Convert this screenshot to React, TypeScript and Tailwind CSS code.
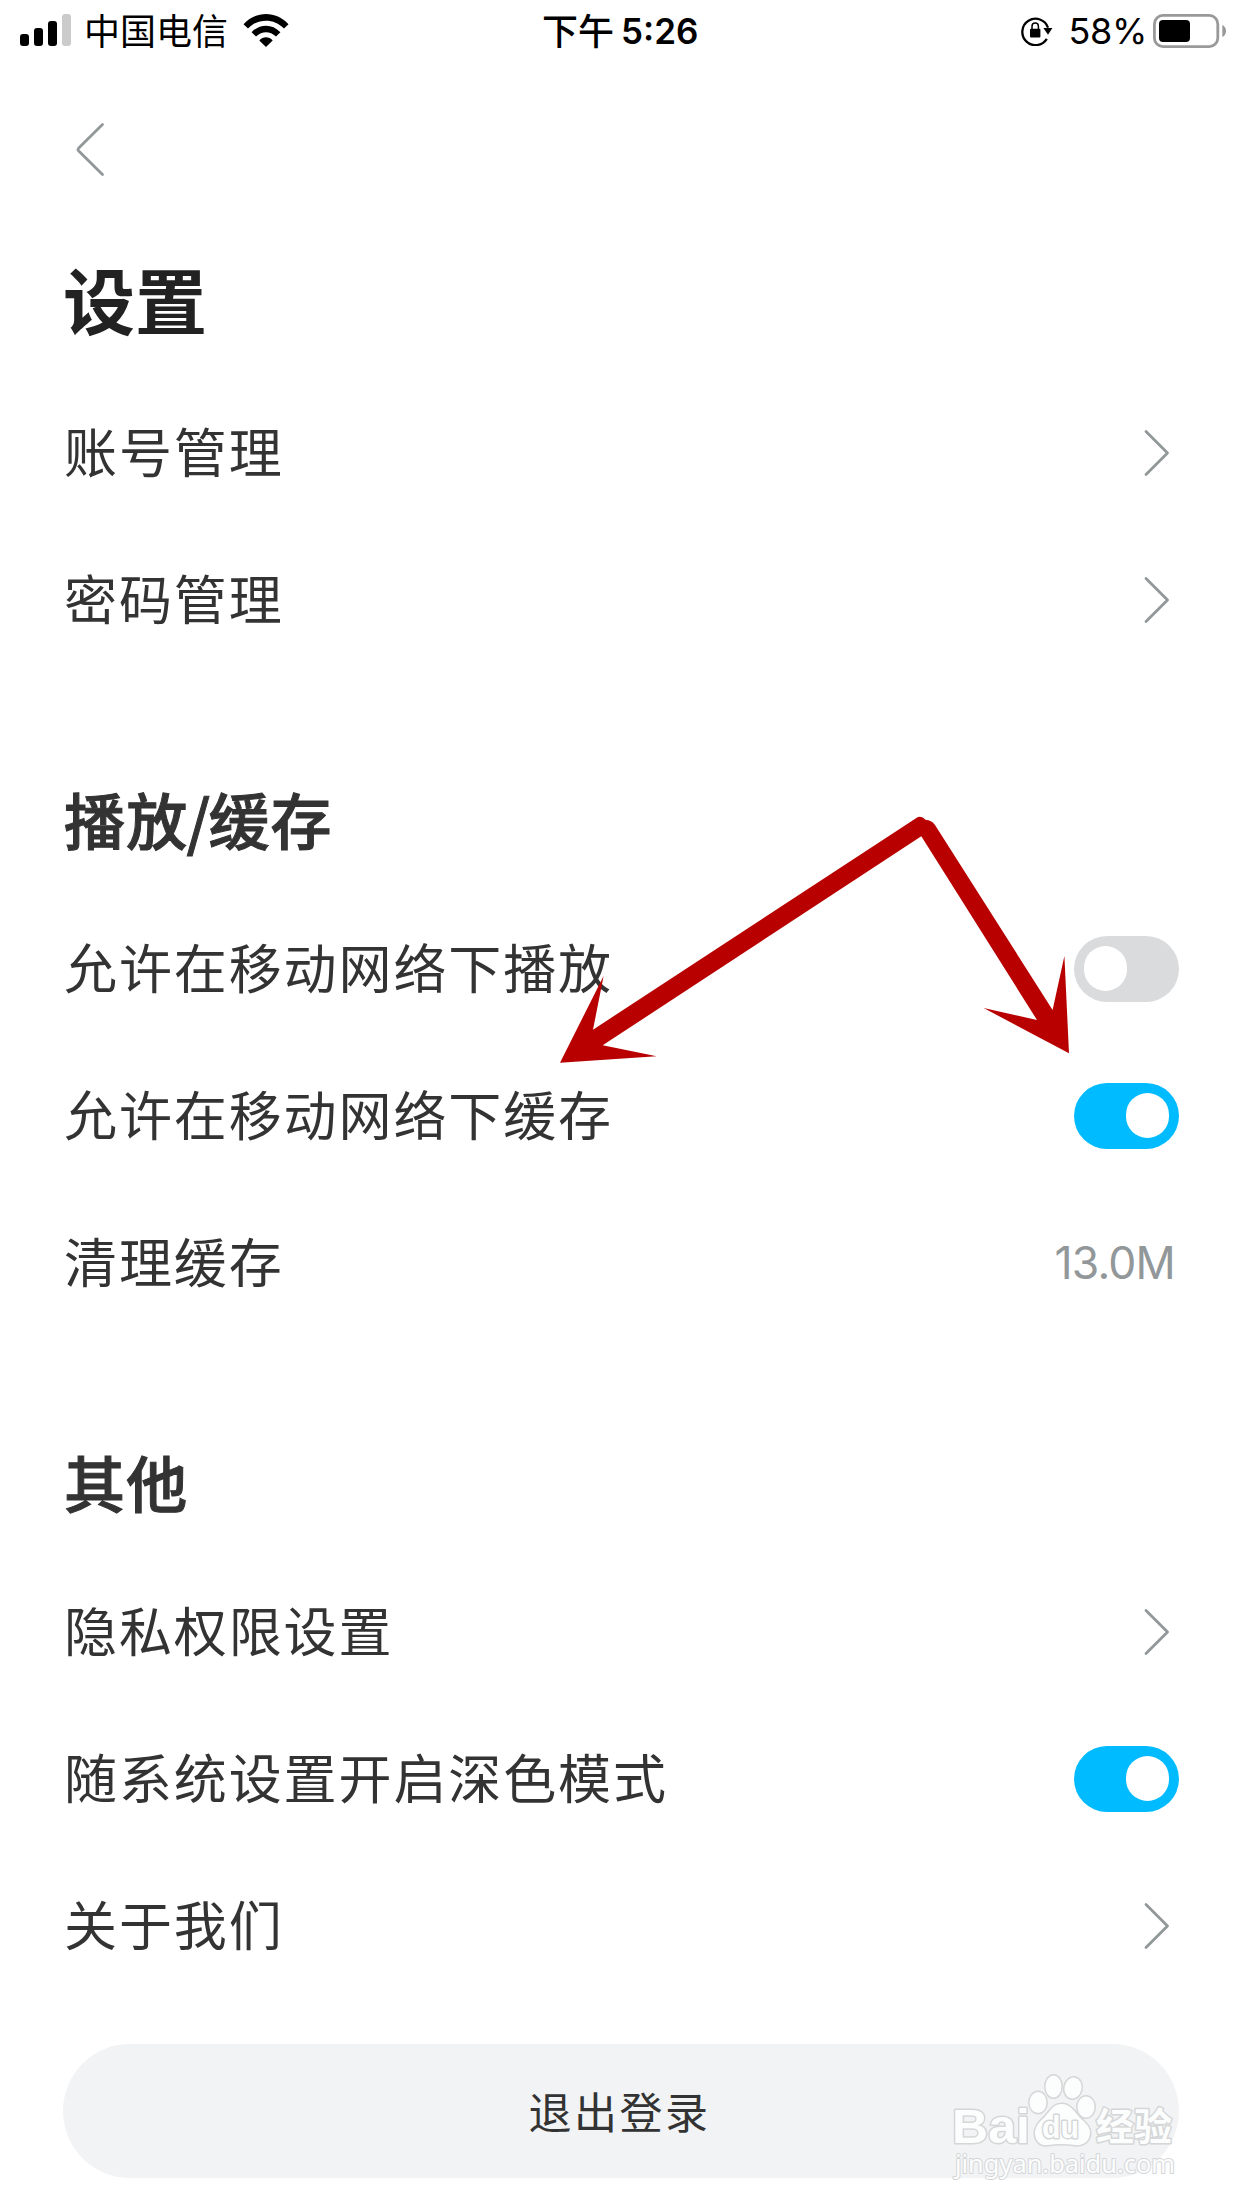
import { useState, type ReactNode } from "react"

const SignalIcon = () => (
  <svg width="52" height="34" viewBox="0 0 52 34">
    <rect x="0" y="20" width="9" height="12" rx="3" />
    <rect x="14" y="14" width="9" height="18" rx="3" />
    <rect x="28" y="7" width="9" height="25" rx="3" />
    <rect x="42" y="0" width="9" height="32" rx="3" fill="#cbcbcb" />
  </svg>
)

const WifiIcon = () => (
  <svg width="46" height="34" viewBox="0 0 46 34">
    <path d="M0.5 10.2C13-3.4 33-3.4 45.5 10.2L41 14.6C31 4 15 4 5 14.6Z" />
    <path d="M8.6 18.2C16.8 9.6 29.2 9.6 37.4 18.2L33 22.6C27 16.8 19 16.8 13 22.6Z" />
    <path d="M16.3 26.4C20.2 22.2 25.8 22.2 29.7 26.4L23 33Z" />
  </svg>
)

const RotationLockIcon = () => (
  <svg width="32" height="30" viewBox="0 0 32 30">
    <path d="M25.8 22.8A13.2 13.2 0 1 1 27 11.6" fill="none" stroke="#000" strokeWidth="2.3" />
    <path d="M22.4 12H31.4L27 18.8Z" />
    <rect x="9" y="12.8" width="10.4" height="8.8" rx="1" />
    <path d="M11 13V10.2a3.2 3.2 0 0 1 6.4 0V13" fill="none" stroke="#000" strokeWidth="1.5" />
  </svg>
)

const BatteryIcon = () => (
  <svg width="74" height="34" viewBox="0 0 74 34">
    <rect x="1.4" y="1.4" width="63.4" height="31.2" rx="8.5" fill="none" stroke="#999" strokeWidth="2.8" />
    <rect x="6" y="6" width="31" height="22" rx="4" />
    <path d="M69.3 11c5 2.3 5 9.7 0 12Z" fill="#999" />
  </svg>
)

const StatusBar = () => (
  <div className="flex items-center justify-between h-[62px] pl-5 font-['Inter','Noto_Sans_CJK_SC',sans-serif] text-[36px] leading-[62px] text-black">
    <div className="flex items-center w-[522px]">
      <SignalIcon />
      <span className="ml-[12px] mr-[15px] pt-[2px] leading-[60px]">中国电信</span>
      <WifiIcon />
    </div>
    <div className="flex flex-1 font-semibold">
      <span className="pt-[2px] leading-[60px] font-medium">下午</span>
      <span className="ml-[7px] text-[35px]">5:26</span>
    </div>
    <div className="flex items-center pr-[15px]">
      <RotationLockIcon />
      <span className="ml-[15px] mr-[6px] tracking-[-0.3px]">58%</span>
      <BatteryIcon />
    </div>
  </div>
)

const Chevron = () => (
  <svg className="mr-[9px]" width="26" height="48" viewBox="0 0 26 48" fill="none" stroke="#929799" strokeWidth="2.8" strokeLinecap="round" strokeLinejoin="round">
    <path d="M2 2.5L23.5 24L2 45.5" />
  </svg>
)

const Toggle = ({ defaultOn = false }: { defaultOn?: boolean }) => {
  const [on, setOn] = useState<boolean>(defaultOn)

  return (
    <button
      onClick={() => setOn(!on)}
      className={`flex items-center w-[105px] h-[66px] px-[10px] rounded-full ${on ? "justify-end bg-[#00bbff]" : "justify-start bg-[#dadbdd]"}`}
    >
      <span className="w-[43px] h-[45px] rounded-full bg-white" />
    </button>
  )
}

const Row = ({ label, children }: { label: string, children: ReactNode }) => (
  <div className="flex items-center justify-between h-[147px]">
    <span className="pl-px pb-[4px] text-[53px] tracking-[1.9px] text-[#333]">{label}</span>
    {children}
  </div>
)

const SectionTitle = ({ children }: { children: ReactNode }) => (
  <h2 className="pl-px h-[100px] leading-[102px] text-[61px] tracking-[1.2px] font-medium text-[#333] [-webkit-text-stroke:1px_#333]">{children}</h2>
)

// Red arrows pointing at the cache option and its switch
const Arrows = () => (
  <svg className="absolute left-[550px] top-[806px] pointer-events-none" width="530" height="266" viewBox="550 806 530 266" fill="#b90000">
    <path d="M560 1062.7L603.6 976L593 1029.7L916 818.2Q921 814.8 925.5 819.7Q931.5 820 935 825L1052.6 1010L1064.4 956L1069 1053.3L983.6 1008L1037 1020L921.3 836.3L602.7 1045.3L656.6 1056.3Z" />
  </svg>
)

const Watermark = () => (
  <svg className="absolute left-[940px] top-[2060px] pointer-events-none" width="250" height="130" viewBox="0 0 250 130" fill="#fcfdfd" stroke="#d4d6d7" strokeWidth="3" paintOrder="stroke" strokeLinejoin="round">
    <text x="12" y="83" fontFamily="Liberation Sans" fontWeight="700" fontSize="49" textLength="78" lengthAdjust="spacingAndGlyphs">Bai</text>
    <ellipse cx="98" cy="42.5" rx="8.5" ry="10.5" />
    <ellipse cx="113.5" cy="26.5" rx="8" ry="11" />
    <ellipse cx="133" cy="28" rx="8.5" ry="10.5" transform="rotate(12 133 28)" />
    <ellipse cx="146" cy="47" rx="8.5" ry="10.5" />
    <path d="M121.5 44c8 0 12 6 16.5 11.5c5 6 12 9.5 12 17c0 9-7 13.5-15 12.5c-9-1.5-18-1.5-27 0c-8 1-13-4-13-12c0-8 6-12 11-17.5c5-6 8-11.5 15.5-11.5Z" />
    <text x="102" y="78" fontFamily="Liberation Sans" fontWeight="700" fontSize="32" textLength="37" lengthAdjust="spacingAndGlyphs">du</text>
    <text x="156" y="80" fontFamily="Noto Sans CJK SC" fontWeight="700" fontSize="38" textLength="76">经验</text>
    <text x="15" y="113" fontFamily="Noto Sans" fontSize="25" textLength="220" lengthAdjust="spacingAndGlyphs" strokeWidth="2">jingyan.baidu.com</text>
  </svg>
)

export default function App() {
  return (
    <div className="relative w-[1242px] h-[2208px] overflow-hidden bg-white font-['Noto_Sans_CJK_SC',sans-serif]">
      <StatusBar />
      <main className="px-[63px]">
        <button className="block mt-[60px] ml-[12px]">
          <svg width="30" height="56" viewBox="0 0 30 56" fill="none" stroke="#929799" strokeWidth="2.8" strokeLinecap="round" strokeLinejoin="round">
            <path d="M27.5 2.5L3.5 26.3Q2.5 27.5 3.5 28.7L27.5 52.5" />
          </svg>
        </button>
        <h1 className="mt-[70px] h-[100px] leading-[100px] text-[72px] font-bold text-[#222]">设置</h1>

        <section className="mt-[31px]">
          <Row label="账号管理"><Chevron /></Row>
          <Row label="密码管理"><Chevron /></Row>
        </section>

        <section className="mt-[95px]">
          <SectionTitle>播放<span className="-ml-[2px] -mr-[3px]">/</span>缓存</SectionTitle>
          <div className="mt-[27px]">
            <Row label="允许在移动网络下播放"><Toggle /></Row>
            <Row label="允许在移动网络下缓存"><Toggle defaultOn /></Row>
            <Row label="清理缓存">
              <span className="mr-[4px] pt-[2px] font-['Inter',sans-serif] text-[44.5px] tracking-[-0.8px] text-[#929799]">13.0M</span>
            </Row>
          </div>
        </section>

        <section className="mt-[95px]">
          <SectionTitle>其他</SectionTitle>
          <div className="mt-[27px]">
            <Row label="隐私权限设置"><Chevron /></Row>
            <Row label="随系统设置开启深色模式"><Toggle defaultOn /></Row>
            <Row label="关于我们"><Chevron /></Row>
          </div>
        </section>

        <button className="mt-[45px] w-full h-[134px] pr-[3px] pb-[2px] rounded-full bg-[#f2f3f5] text-[43px] tracking-[2.5px] text-[#333]">退出登录</button>
      </main>
      <Arrows />
      <Watermark />
    </div>
  )
}
